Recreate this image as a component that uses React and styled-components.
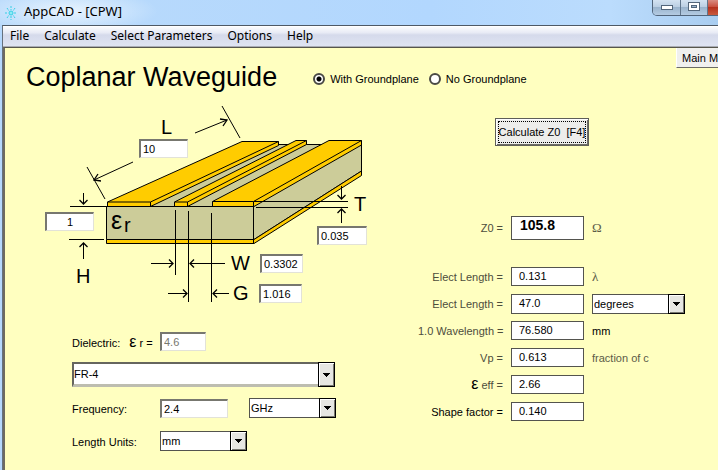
import React from "react";
import styled, { createGlobalStyle, css } from "styled-components";

const GlobalStyle = createGlobalStyle`
  *, *::before, *::after { box-sizing: border-box; }
  body {
    margin: 0;
    overflow: hidden;
    font: 11px/16px "Liberation Sans", Arial, sans-serif;
    color: #000;
  }
  button, input, select { font: inherit; color: inherit; border-radius: 0; margin: 0; }
`;

const Window = styled.div`
  display: flex;
  flex-direction: column;
  min-height: 100vh;
  overflow: hidden;
  background: #b5d8fd;
`;

const TitleBar = styled.header`
  display: flex;
  align-items: center;
  height: 25px;
  padding-left: 4px;
  font: 13px/20px "Noto Sans", "Open Sans", sans-serif;
  background:
    radial-gradient(ellipse 90px 22px at 68px 11px, rgba(240, 248, 255, 0.85), rgba(240, 248, 255, 0) 100%),
    linear-gradient(90deg, #b9dafb, #b2d7fe 60%, #bbdcfd 85%, #a9cdf0);
`;

const Caption = styled.h1`
  margin: 0 auto 4px 6px;
  font: inherit;
`;

const Controls = styled.div`
  display: flex;
  align-self: flex-start;
  height: 16px;
  margin-right: -26px;
  border: 1px solid #52657b;
  border-top: 0;
  border-radius: 0 0 5px 5px;
  overflow: hidden;
`;

const ControlButton = styled.button`
  display: flex;
  align-items: center;
  justify-content: center;
  width: ${(p) => (p.$close ? 36 : 27)}px;
  padding: 0 0 2px;
  border: 0;
  border-left: ${(p) => (p.$first ? "0" : "1px solid #60758c")};
  align-items: ${(p) => (p.$first ? "flex-end" : "center")};
  background: ${(p) =>
    p.$close
      ? "linear-gradient(#d98b80, #c9503f 45%, #b5301c 50%, #c85a3e)"
      : "linear-gradient(#d3e2f1, #bccfe3 45%, #9bb4cd 50%, #b4cbe2)"};
  svg { margin-bottom: ${(p) => (p.$first ? 3 : 1)}px; }
`;

const Frame = styled.div`
  display: flex;
  flex: 1;
  flex-direction: column;
  margin-left: 2px;
  border-left: 1px solid #66717d;
  border-top: 1px solid #4e5965;
`;

const MenuBar = styled.nav`
  display: flex;
  align-items: center;
  gap: 15px;
  height: 21px;
  padding-left: 7px;
  border-top: 1px solid #fff;
  border-bottom: 1px solid #a9acb4;
  background: linear-gradient(#fafbfd, #e8ebf5 30%, #d5daeb 42%, #dfe4f2);
`;

const MenuItem = styled.button`
  padding: 0 0 2px;
  border: 0;
  background: none;
  font: 12px/18px "Noto Sans", "Open Sans", sans-serif;
`;

const Sheet = styled.main`
  flex: 1;
  border-left: 2px solid #6d6b62;
  border-top: 1px solid #57564c;
  background: #ffffc0;
`;

const Heading = styled.div`
  display: flex;
  align-items: center;
  height: 57px;
  padding-left: 21px;
`;

const PageTitle = styled.h2`
  margin: 0 36px 0 0;
  font-size: 27px;
  font-weight: 400;
  line-height: 32px;
  white-space: nowrap;
`;

const Options = styled.div`
  display: flex;
  gap: 10px;
  padding-top: 4px;
  white-space: nowrap;
`;

const RadioLabel = styled.label`
  display: flex;
  align-items: center;
  gap: 5px;
`;

const Radio = styled.input`
  appearance: none;
  width: 12px;
  height: 12px;
  border: 2px solid #4a4a45;
  border-radius: 50% !important;
  background: #fff;
  &:checked { background: radial-gradient(circle, #000 2px, #fff 3px); }
`;

const MainMenu = styled.button`
  align-self: flex-start;
  flex: none;
  width: 72px;
  height: 20px;
  margin: 0 -30px 0 auto;
  padding: 0 0 0 5px;
  border: 0;
  border-left: 1px solid #fff;
  border-bottom: 1px solid #6b6b66;
  background: #f0f0ee;
  text-align: left;
`;

const Columns = styled.div`
  display: flex;
  gap: 48px;
  padding-left: 40px;
`;

const Geometry = styled.section`
  flex: none;
`;

const Canvas = styled.div`
  position: relative;
  width: 325px;
  height: 200px;
  svg { display: block; }
`;

const sunken = css`
  border: 1px solid #e2e2d8;
  border-top: 2px solid #77776f;
  border-left: 2px solid #77776f;
  background: #fff;
`;

const Field = styled.input`
  ${sunken}
  width: ${(p) => p.$w}px;
  height: 19px;
  padding: 0 2px;
  &:disabled { color: #77776f; -webkit-text-fill-color: #77776f; }
`;

const DimensionField = styled(Field)`
  position: absolute;
  left: ${(p) => p.$x}px;
  top: ${(p) => p.$y}px;
  text-align: ${(p) => (p.$center ? "center" : "left")};
`;

const Material = styled.form`
  display: grid;
  grid-template-columns: 88px 74px 15px auto;
  align-items: center;
  margin: 27px 0 0 27px;
`;

const FormRow = styled.div`
  display: grid;
  grid-template-columns: subgrid;
  grid-column: 1 / -1;
  align-items: center;
  margin-bottom: ${(p) => p.$after}px;
`;

const FormLabel = styled.label`
  padding-top: 2px;
  white-space: nowrap;
`;

const Epsilon = styled.span`
  margin: 0 3px 0 ${(p) => (p.$lead ? 6 : 0)}px;
  color: #000;
  font: 16px/12px "Liberation Sans", sans-serif;
`;

const SelectBox = styled.div`
  position: relative;
  grid-column: ${(p) => p.$span || "auto"};
  width: ${(p) => p.$w}px;
  height: ${(p) => (p.$large ? 25 : 20)}px;
`;

const Select = styled.select`
  appearance: none;
  width: 100%;
  height: 100%;
  padding: 0 18px 0 1px;
  border: 1px solid #54544e;
  background: #fff;
  ${(p) =>
    p.$large &&
    css`
      padding-left: 0;
      border: 2px solid #66665e;
      border-right-color: #bdbdb0;
      border-bottom: 3px solid #bdbdb0;
    `}
`;

const Arrow = styled.span`
  position: absolute;
  inset: 0 0 0 auto;
  display: flex;
  align-items: center;
  justify-content: center;
  width: 17px;
  border: 1px solid #000;
  box-shadow: inset 1px 1px #fff, inset -1px -1px #77776f;
  background: #e6e6e2;
  pointer-events: none;
`;

const Results = styled.section`
  padding-top: 13px;
`;

const Calculate = styled.button`
  display: block;
  width: 94px;
  height: 28px;
  margin: 0 0 70px 77px;
  padding: 2px;
  border: 1px solid #5f5f59;
  box-shadow: inset 1px 1px #fff, inset -1px -1px #6d6d66;
  background: #ededeb;
  white-space: pre;
`;

const FocusRing = styled.span`
  display: flex;
  align-items: center;
  justify-content: center;
  height: 22px;
  border: 1px dotted #000;
`;

const ResultList = styled.div`
  display: grid;
  grid-template-columns: 85px 73px auto;
  gap: 8px;
`;

const ResultRow = styled.div`
  display: grid;
  grid-template-columns: subgrid;
  grid-column: 1 / -1;
  align-items: center;
  height: ${(p) => (p.$main ? 24 : 19)}px;
  margin-bottom: ${(p) => (p.$main ? 19 : 0)}px;
`;

const ResultLabel = styled.label`
  color: ${(p) => (p.$dark ? "#000" : "#4d4d3c")};
  text-align: right;
  white-space: nowrap;
`;

const Output = styled.output`
  height: 100%;
  padding-left: 7px;
  border: 1px solid #54544e;
  background: #fff;
  ${(p) =>
    p.$main &&
    css`
      font-size: 14px;
      font-weight: 700;
      padding-left: 8px;
    `}
`;

const Unit = styled.span`
  color: ${(p) => (p.$dark ? "#000" : "#5c5c48")};
  font-family: ${(p) => (p.$serif ? '"Liberation Serif", serif' : "inherit")};
  font-size: ${(p) => (p.$serif ? 13 : 11)}px;
`;

function Dropdown({ id, width, span, large, options, label }) {
  return (
    <SelectBox $w={width} $span={span} $large={large}>
      <Select id={id} $large={large} aria-label={label}>
        {options.map((o) => (
          <option key={o}>{o}</option>
        ))}
      </Select>
      <Arrow>
        <svg width="7" height="4" viewBox="0 0 7 4" shapeRendering="crispEdges">
          <path d="M0 0H7L3.5 4Z" />
        </svg>
      </Arrow>
    </SelectBox>
  );
}

function AppIcon() {
  return (
    <svg width="14" height="16" viewBox="0 0 14 16" stroke="#36cfe6" fill="none">
      <path d="M7 1V5M7 11V15M1 8H4M10 8H13M3 3L5 6M11 3L9 6M3 13L5 10M11 13L9 10" strokeDasharray="2 1" />
      <circle cx="7" cy="8" r="2" fill="#8cebf5" />
    </svg>
  );
}

function WaveguideDrawing() {
  return (
    <svg width="325" height="200" viewBox="45 105 325 200" fill="none" stroke="#000" fontFamily="Liberation Sans, Arial, sans-serif">
      <g strokeWidth="1">
        <path fill="#cccc99" d="M106.5 206.5L242 144.5H361.5V171L254 239.5H106.5Z" />
        <path fill="#ffcc00" d="M106.5 239.5H254L361.5 171V175.5L254 243.5H106.5Z" />
        <path fill="#ffcc00" d="M107.5 202L242 141.5H278.5V145.5L150.5 206.5H107.5Z" />
        <path d="M107.5 202H150.5L278.5 141.5M150.5 202V206" />
        <path fill="#ffcc00" d="M174.5 202L296 140.5H306.5V144.5L187.5 206.5H174.5Z" />
        <path d="M174.5 202H187.5L306.5 140.5M187.5 202V206" />
        <path fill="#ffcc00" d="M212.5 201.5L329 140.5H361.5V145L254 206.5H212.5Z" />
        <path d="M212.5 201.5H253.5L361.5 140.5M253.5 201.5V243.5M106 206.5H254" />
      </g>
      <g shapeRendering="crispEdges">
        <path d="M70 206.5H106M69 239.5H104M254 201.5H348M256 207.5H348" />
        <path d="M175.5 210V275M188.5 211V302M211.5 213V302" />
        <path d="M83.5 193V204M83.5 259V243M341.5 186V198M341.5 223V209" />
        <path d="M151 263.5H173M225 263.5H190M168 293.5H187M229 293.5H213" />
      </g>
      <path d="M87 167L105 199M133 162L94 180M222 106L240 138M195 133L227 120" />
      <path
        strokeWidth="1.3"
        d="M79.5 200L83.5 204L87.5 200M79.5 247L83.5 243L87.5 247M337.5 195L341.5 199L345.5 195M337.5 213L341.5 209L345.5 213M169 259.5L173 263.5L169 267.5M194 259.5L190 263.5L194 267.5M183 289.5L187 293.5L183 297.5M217 289.5L213 293.5L217 297.5M98 174L94 180L101 181M220 119L227 120L223 126"
      />
      <g fill="#000" stroke="none" fontSize="20">
        <text x="161" y="134">L</text>
        <text x="76" y="283">H</text>
        <text x="354" y="211">T</text>
        <text x="231" y="270">W</text>
        <text x="233" y="300">G</text>
        <text x="111" y="229" fontSize="25">ε</text>
        <text x="124" y="232">r</text>
      </g>
    </svg>
  );
}

const dimensions = [
  { name: "Length L", value: "10", x: 94, y: 34, w: 49 },
  { name: "Height H", value: "1", x: 0, y: 107, w: 49, center: true },
  { name: "Thickness T", value: "0.035", x: 272, y: 121, w: 50 },
  { name: "Width W", value: "0.3302", x: 215, y: 149, w: 43 },
  { name: "Gap G", value: "1.016", x: 214, y: 179, w: 43 },
];

const results = [
  { id: "z0", label: "Z0 =", value: "105.8", unit: "Ω", serif: true, main: true },
  { id: "lambda", label: "Elect Length =", value: "0.131", unit: "λ", serif: true },
  { id: "degrees", label: "Elect Length =", value: "47.0", select: ["degrees", "radians"] },
  { id: "wavelength", label: "1.0 Wavelength =", value: "76.580", unit: "mm", darkUnit: true },
  { id: "vp", label: "Vp =", value: "0.613", unit: "fraction of c" },
  { id: "eeff", label: "eff =", epsilon: true, value: "2.66" },
  { id: "shape", label: "Shape factor =", value: "0.140", dark: true },
];

export default function App() {
  return (
    <Window>
      <GlobalStyle />
      <TitleBar>
        <AppIcon />
        <Caption>AppCAD - [CPW]</Caption>
        <Controls>
          <ControlButton $first aria-label="Minimize">
            <svg width="12" height="5" viewBox="0 0 12 5">
              <rect x=".5" y=".5" width="11" height="4" fill="#fff" stroke="#53657a" />
            </svg>
          </ControlButton>
          <ControlButton aria-label="Maximize">
            <svg width="12" height="9" viewBox="0 0 12 9" fill="#fff" stroke="#53657a">
              <rect x=".5" y=".5" width="11" height="8" />
              <rect x="3.5" y="3.5" width="5" height="2" fill="#9bb4cd" />
            </svg>
          </ControlButton>
          <ControlButton $close aria-label="Close" />
        </Controls>
      </TitleBar>
      <Frame>
        <MenuBar>
          {["File", "Calculate", "Select Parameters", "Options", "Help"].map((m) => (
            <MenuItem key={m}>{m}</MenuItem>
          ))}
        </MenuBar>
        <Sheet>
          <Heading>
            <PageTitle>Coplanar Waveguide</PageTitle>
            <Options>
              <RadioLabel>
                <Radio type="radio" name="ground" defaultChecked />
                With Groundplane
              </RadioLabel>
              <RadioLabel>
                <Radio type="radio" name="ground" />
                No Groundplane
              </RadioLabel>
            </Options>
            <MainMenu>Main Menu</MainMenu>
          </Heading>
          <Columns>
            <Geometry>
              <Canvas>
                <WaveguideDrawing />
                {dimensions.map((d) => (
                  <DimensionField key={d.name} aria-label={d.name} defaultValue={d.value} $x={d.x} $y={d.y} $w={d.w} $center={d.center} />
                ))}
              </Canvas>
              <Material>
                <FormRow $after={11}>
                  <FormLabel htmlFor="er">
                    Dielectric: <Epsilon $lead>ε</Epsilon>r =
                  </FormLabel>
                  <Field id="er" $w={46} defaultValue="4.6" disabled />
                </FormRow>
                <FormRow $after={11}>
                  <Dropdown label="Dielectric material" width={263} span="1 / -1" large options={["FR-4", "Alumina"]} />
                </FormRow>
                <FormRow $after={13}>
                  <FormLabel htmlFor="freq">Frequency:</FormLabel>
                  <Field id="freq" $w={68} defaultValue="2.4" />
                  <Dropdown label="Frequency units" width={87} span="4" options={["GHz", "MHz"]} />
                </FormRow>
                <FormRow $after={8}>
                  <FormLabel htmlFor="units">Length Units:</FormLabel>
                  <Dropdown id="units" width={87} span="2 / -1" options={["mm", "mils"]} />
                </FormRow>
              </Material>
            </Geometry>
            <Results>
              <Calculate>
                <FocusRing>{"Calculate Z0  [F4]"}</FocusRing>
              </Calculate>
              <ResultList>
                {results.map((r) => (
                  <ResultRow key={r.id} $main={r.main}>
                    <ResultLabel htmlFor={r.id} $dark={r.dark}>
                      {r.epsilon && <Epsilon>ε</Epsilon>}
                      {r.label}
                    </ResultLabel>
                    <Output id={r.id} $main={r.main}>{r.value}</Output>
                    {r.select ? (
                      <Dropdown label="Electrical length units" width={93} options={r.select} />
                    ) : (
                      <Unit $serif={r.serif} $dark={r.darkUnit}>{r.unit}</Unit>
                    )}
                  </ResultRow>
                ))}
              </ResultList>
            </Results>
          </Columns>
        </Sheet>
      </Frame>
    </Window>
  );
}
